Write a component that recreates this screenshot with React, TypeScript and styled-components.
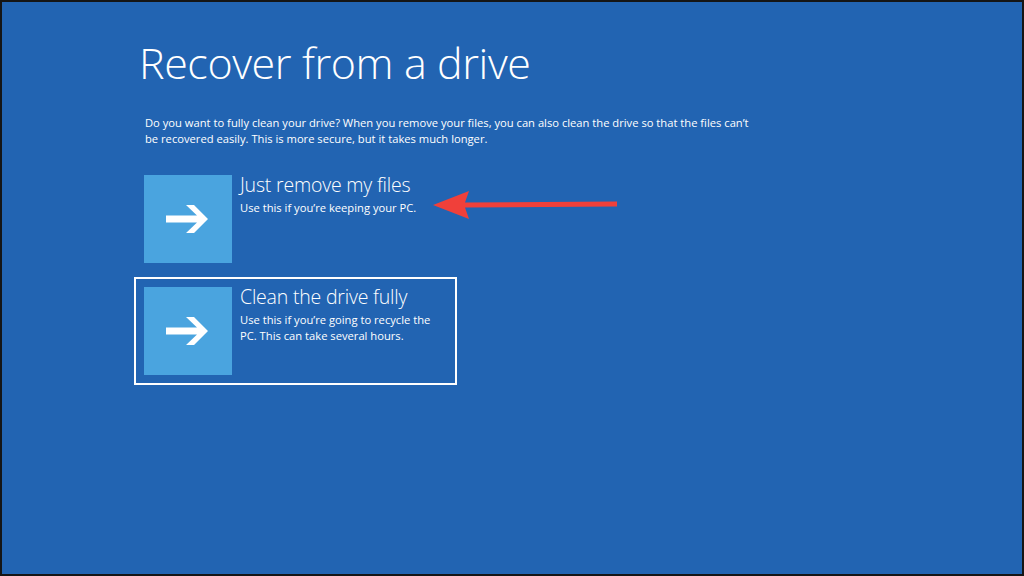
import styled, { createGlobalStyle } from 'styled-components';

const GlobalStyle = createGlobalStyle`
  html, body {
    margin: 0;
    padding: 0;
    background: #151515;
  }
  * {
    box-sizing: border-box;
  }
`;

const Screen = styled.main`
  width: 1024px;
  height: 576px;
  border: 2px solid #151515;
  background: #2264b2;
  color: #ffffff;
  font-family: 'Open Sans', 'Noto Sans', sans-serif;
  padding: 30px 0 0 139px;
  position: relative;
  overflow: hidden;
`;

const Title = styled.h1`
  margin: 0 0 0 -2px;
  font-size: 43px;
  font-weight: 300;
  line-height: 62px;
  letter-spacing: -0.4px;
`;

const Description = styled.p`
  margin: 21px 0 0 4px;
  width: 606px;
  font-size: 11.2px;
  line-height: 16px;
`;

const Options = styled.div`
  display: flex;
  flex-direction: column;
  gap: 4px;
  margin: 18px 0 0 -7px;
`;

const Option = styled.button<{ $selected?: boolean }>`
  display: flex;
  gap: 8px;
  width: 323px;
  padding: 8px;
  border: 2px solid ${(p) => (p.$selected ? '#ffffff' : 'transparent')};
  background: transparent;
  color: inherit;
  font-family: inherit;
  text-align: left;
  cursor: pointer;
`;

const Tile = styled.div`
  flex: none;
  width: 88px;
  height: 88px;
  background: #4aa4df;
  display: flex;
  align-items: center;
  justify-content: center;
`;

const OptionText = styled.div`
  display: flex;
  flex-direction: column;
`;

const OptionTitle = styled.span`
  font-size: 19.5px;
  font-weight: 300;
  line-height: 20px;
  letter-spacing: -0.2px;
`;

const OptionSub = styled.span`
  margin-top: 5px;
  max-width: 198px;
  font-size: 11.2px;
  line-height: 16px;
`;

const Callout = styled.svg`
  position: absolute;
  left: 431px;
  top: 187px;
`;

function ArrowGlyph() {
  return (
    <svg width="44" height="32" viewBox="0 0 44 32">
      <polygon
        fill="#ffffff"
        points="0,12.5 31,12.5 20,2 28,2 42,16 28,30 20,30 31,19.5 0,19.5"
      />
    </svg>
  );
}

export default function App() {
  return (
    <>
      <GlobalStyle />
      <Screen>
        <Title>Recover from a drive</Title>
        <Description>
          Do you want to fully clean your drive? When you remove your files, you can also clean the
          drive so that the files can’t be recovered easily. This is more secure, but it takes much
          longer.
        </Description>
        <Options>
          <Option>
            <Tile>
              <ArrowGlyph />
            </Tile>
            <OptionText>
              <OptionTitle>Just remove my files</OptionTitle>
              <OptionSub>Use this if you’re keeping your PC.</OptionSub>
            </OptionText>
          </Option>
          <Option $selected>
            <Tile>
              <ArrowGlyph />
            </Tile>
            <OptionText>
              <OptionTitle>Clean the drive fully</OptionTitle>
              <OptionSub>
                Use this if you’re going to recycle the PC. This can take several hours.
              </OptionSub>
            </OptionText>
          </Option>
        </Options>
        <Callout width="186" height="32" viewBox="0 0 186 32">
          <polygon fill="#f0403a" points="0,16 36,2 32,13.5 184,12.5 184,17.5 32,18.5 36,30" />
        </Callout>
      </Screen>
    </>
  );
}
